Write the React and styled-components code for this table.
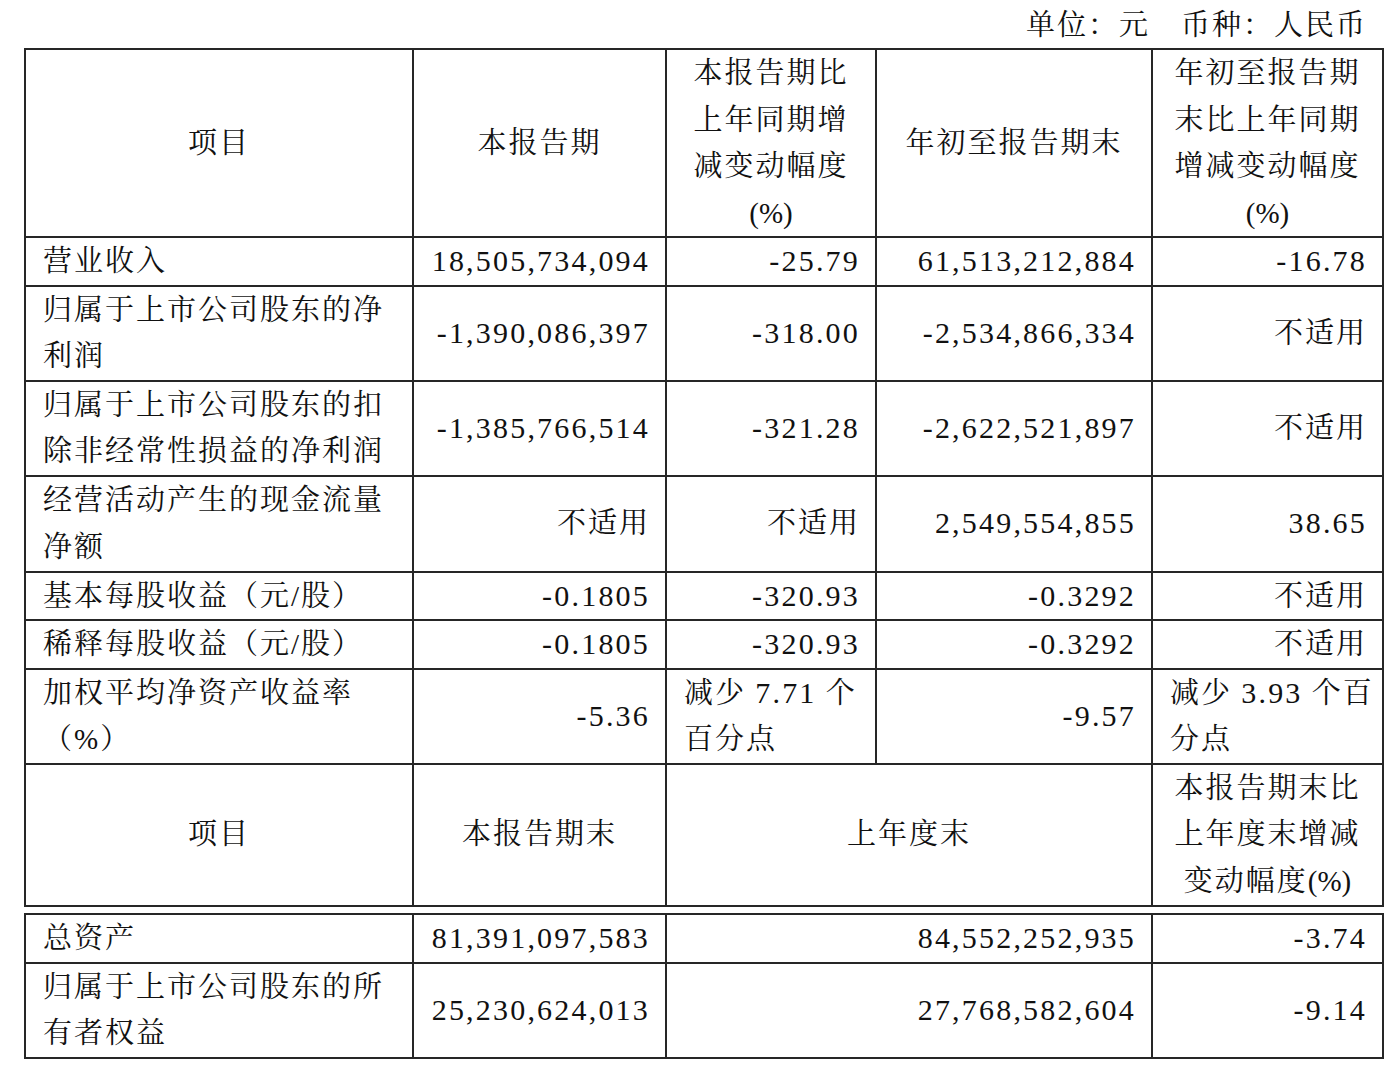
import React from 'react';
import styled, { createGlobalStyle } from 'styled-components';

const GlobalStyle = createGlobalStyle`
  html, body {
    margin: 0;
    padding: 0;
    background: #fff;
  }
  body {
    font-family: "Liberation Serif", "Noto Serif CJK SC", "Noto Sans CJK SC", serif;
    color: #111;
  }
`;

const Page = styled.div`
  width: 1358px;
  padding-left: 24px;
`;

const Caption = styled.div`
  height: 48px;
  box-sizing: border-box;
  padding: 3px 15px 0 0;
  text-align: right;
  font-size: 29px;
  letter-spacing: 2px;
  line-height: 44px;
  white-space: nowrap;
`;

const Table = styled.table`
  width: 1358px;
  table-layout: fixed;
  border-collapse: collapse;
  margin-top: ${p => p.$gap || 0}px;
`;

const Row = styled.tr`
  height: ${p => p.$h}px;
`;

const Cell = styled.td`
  border: 2px solid #262626;
  padding: 0 15px 0 17px;
  vertical-align: middle;
  text-align: ${p => p.$align || 'left'};
  font-size: 29px;
  line-height: 46.5px;
  letter-spacing: 2px;
  white-space: nowrap;
  overflow: hidden;
`;

const HeadCell = styled(Cell)`
  text-align: center;
  padding: 0 4px;
`;

const Num = styled.span`
  font-size: 30px;
  letter-spacing: 2.2px;
`;

const Paren = styled.span`
  font-size: 29px;
  letter-spacing: 0;
`;

const cols = [388, 253, 210, 276, 231];

const Cols = () => (
  <colgroup>
    {cols.map((w, i) => <col key={i} style={{ width: w }} />)}
  </colgroup>
);

const rows = [
  { h: 47, label: ['营业收入'], v: ['18,505,734,094', '-25.79', '61,513,212,884', '-16.78'] },
  { h: 95, label: ['归属于上市公司股东的净', '利润'], v: ['-1,390,086,397', '-318.00', '-2,534,866,334', '不适用'] },
  { h: 95, label: ['归属于上市公司股东的扣', '除非经常性损益的净利润'], v: ['-1,385,766,514', '-321.28', '-2,622,521,897', '不适用'] },
  { h: 96, label: ['经营活动产生的现金流量', '净额'], v: ['不适用', '不适用', '2,549,554,855', '38.65'] },
  { h: 48, label: ['基本每股收益（元/股）'], v: ['-0.1805', '-320.93', '-0.3292', '不适用'] },
  { h: 48, label: ['稀释每股收益（元/股）'], v: ['-0.1805', '-320.93', '-0.3292', '不适用'] },
];

const Lines = ({ lines }) =>
  lines.map((l, i) => (
    <React.Fragment key={i}>
      {i > 0 && <br />}
      {l}
    </React.Fragment>
  ));

const Value = ({ text }) =>
  /[0-9]/.test(text) ? <Num>{text}</Num> : text;

export default function App() {
  return (
    <Page>
      <GlobalStyle />
      <Caption>单位：元　币种：人民币</Caption>
      <Table>
        <Cols />
        <tbody>
          <Row $h={188}>
            <HeadCell>项目</HeadCell>
            <HeadCell>本报告期</HeadCell>
            <HeadCell>
              本报告期比<br />上年同期增<br />减变动幅度<br /><Paren>(%)</Paren>
            </HeadCell>
            <HeadCell>年初至报告期末</HeadCell>
            <HeadCell>
              年初至报告期<br />末比上年同期<br />增减变动幅度<br /><Paren>(%)</Paren>
            </HeadCell>
          </Row>
          {rows.map((r, i) => (
            <Row key={i} $h={r.h}>
              <Cell><Lines lines={r.label} /></Cell>
              {r.v.map((v, j) => (
                <Cell key={j} $align="right"><Value text={v} /></Cell>
              ))}
            </Row>
          ))}
          <Row $h={94}>
            <Cell>加权平均净资产收益率<br />（%）</Cell>
            <Cell $align="right"><Num>-5.36</Num></Cell>
            <Cell>减少 <Num>7.71</Num> 个<br />百分点</Cell>
            <Cell $align="right"><Num>-9.57</Num></Cell>
            <Cell>减少 <Num>3.93</Num> 个百<br />分点</Cell>
          </Row>
          <Row $h={142}>
            <HeadCell>项目</HeadCell>
            <HeadCell>本报告期末</HeadCell>
            <HeadCell colSpan={2}>上年度末</HeadCell>
            <HeadCell>
              本报告期末比<br />上年度末增减<br />变动幅度<Paren>(%)</Paren>
            </HeadCell>
          </Row>
        </tbody>
      </Table>
      <Table $gap={6}>
        <Cols />
        <tbody>
          <Row $h={49}>
            <Cell>总资产</Cell>
            <Cell $align="right"><Num>81,391,097,583</Num></Cell>
            <Cell $align="right" colSpan={2}><Num>84,552,252,935</Num></Cell>
            <Cell $align="right"><Num>-3.74</Num></Cell>
          </Row>
          <Row $h={95}>
            <Cell>归属于上市公司股东的所<br />有者权益</Cell>
            <Cell $align="right"><Num>25,230,624,013</Num></Cell>
            <Cell $align="right" colSpan={2}><Num>27,768,582,604</Num></Cell>
            <Cell $align="right"><Num>-9.14</Num></Cell>
          </Row>
        </tbody>
      </Table>
    </Page>
  );
}
